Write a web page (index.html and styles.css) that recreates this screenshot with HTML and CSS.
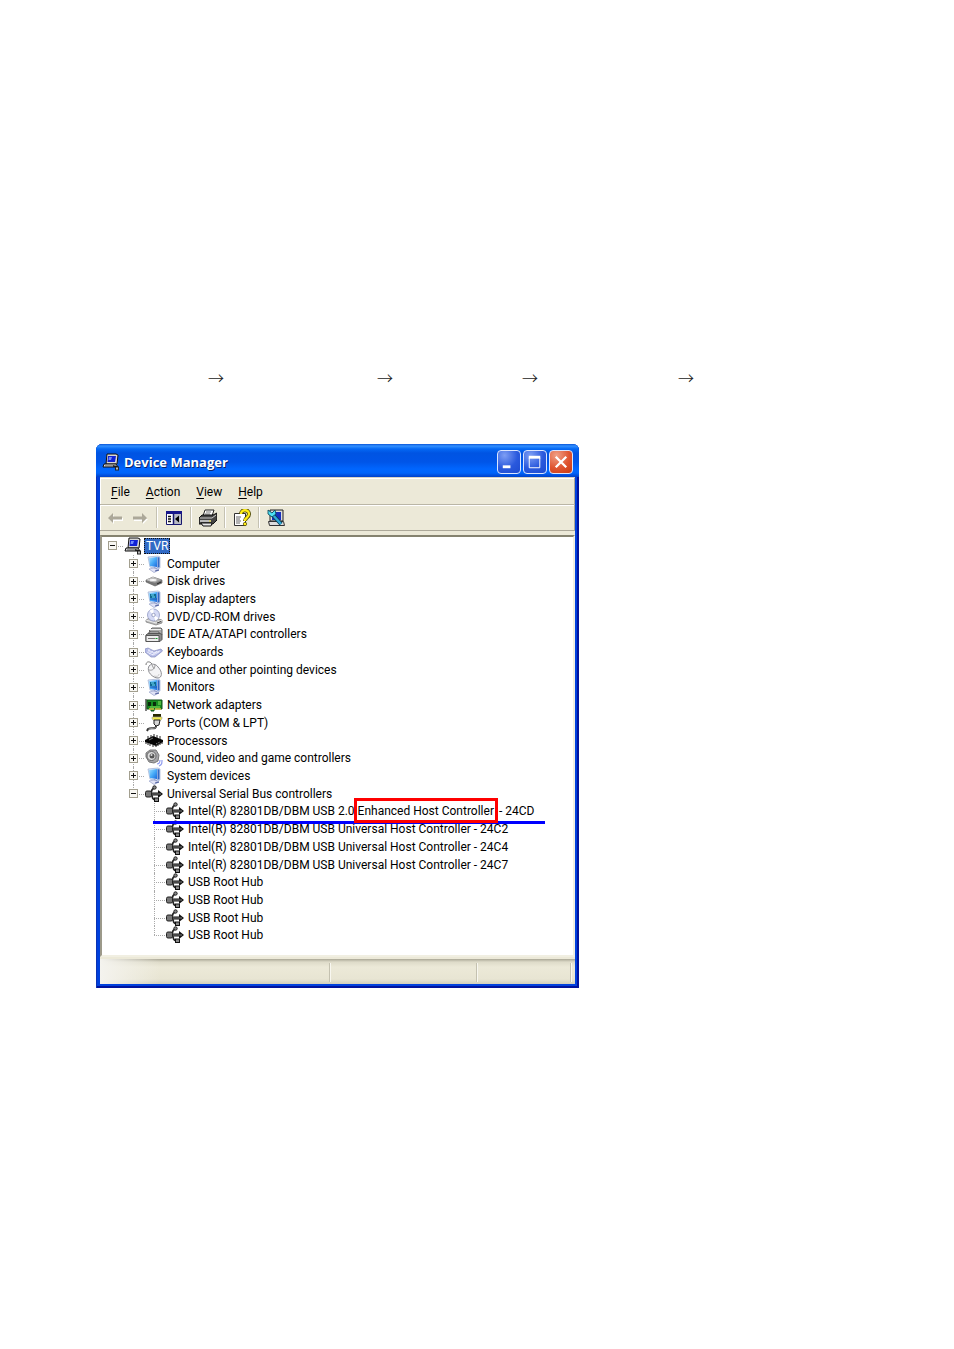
FILE: index.html
```html
<!DOCTYPE html>
<html lang="en">
<head>
<meta charset="utf-8">
<title>Device Manager</title>
<link rel="stylesheet" href="styles.css">
</head>
<body>
<svg class="defs" aria-hidden="true">
  <defs>
    <linearGradient id="screen" x1="0" y1="0" x2="1" y2="1"><stop offset="0" stop-color="#a4e0ff"/><stop offset=".5" stop-color="#48acf8"/><stop offset="1" stop-color="#1a68dc"/></linearGradient>
    <linearGradient id="metal" x1="0" y1="0" x2="1" y2="1"><stop offset="0" stop-color="#f4f4f4"/><stop offset="1" stop-color="#777"/></linearGradient>
  </defs>
  <symbol id="pc" viewBox="0 0 18 18">
    <path d="M5 1h9l2 1-1 9H4z" fill="#d8d8d8" stroke="#111"/><path d="M6 3h8l-1 6H5.500z" fill="#1022d8"/><path d="M7 4h3L9 7H6.500z" fill="#6f8cff"/>
    <path d="M2 11h12l2 3H1z" fill="#ddd" stroke="#111"/><path d="M3 13h9" stroke="#555"/><path d="M11 13c3 0 4 0 5 3" fill="none" stroke="#111" stroke-width="1.500"/><rect x="13.500" y="14" width="3" height="3" fill="#bbb" stroke="#222"/>
  </symbol>
  <symbol id="computer" viewBox="0 0 18 18">
    <path d="M3 2l10-1 2 1v11l-3 1-7-2z" fill="#dbe5f6" stroke="#9fb0d4" stroke-width=".7"/><path d="M4 3l8-1v10l-7-1z" fill="url(#screen)"/><path d="M12.500 2l2 .5V12l-2 1z" fill="#3568c4"/>
    <path d="M9 12l3 1v2H8z" fill="#8e9ac8"/><path d="M4 14l5-1 5 2-5 2.500z" fill="#e0e3f6" stroke="#9aa3cc" stroke-width=".7"/><path d="M10 16l4-1" stroke="#4f5f9f"/>
  </symbol>
  <symbol id="display" viewBox="0 0 18 18">
    <use href="#computer"/><path d="M5 4h6v4H5z" fill="#116a91"/><path d="M6 5h3M7 7h3" stroke="#73e1ff"/><path d="M5 9l7 0" stroke="#1754a5"/>
  </symbol>
  <symbol id="disk" viewBox="0 0 18 18">
    <path d="M1 8l7-3 9 3v3l-7 3-9-4z" fill="#777" stroke="#555" stroke-width=".6"/><path d="M1 8l7-3 9 3-7 3z" fill="url(#metal)"/><ellipse cx="8" cy="8" rx="4" ry="1.500" fill="#f8f8f8" stroke="#999" stroke-width=".5"/><path d="M12 12l4-2" stroke="#222"/>
  </symbol>
  <symbol id="dvd" viewBox="0 0 18 18">
    <path d="M1 12l5-3 11 3v3l-6 2-10-3z" fill="#bbb" stroke="#777" stroke-width=".7"/><path d="M1 12l10 3 6-3" fill="none" stroke="#eee"/><ellipse cx="8.500" cy="7" rx="6" ry="6" fill="#d5daf5" stroke="#8e97c0" stroke-width=".8"/><path d="M8.500 7l-4-4a6 6 0 0 1 4-2zM8.500 7l5 3-3 3z" fill="#fff"/><circle cx="8.500" cy="7" r="1.700" fill="#fff" stroke="#858eb8" stroke-width=".8"/><path d="M12 15l4-1.500" stroke="#444"/>
  </symbol>
  <symbol id="ide" viewBox="0 0 18 18">
    <path d="M4 6l3-3h9l1 1v6l-3 2z" fill="#aaa" stroke="#666"/><path d="M5 4.500h11" stroke="#eee"/><path d="M4 7h10v3H4z" fill="#eee" stroke="#555"/><path d="M1 10l2-1.500h12l2 1v5l-2 2H1z" fill="#8c8c8c" stroke="#555"/><path d="M1 10.500h13v6H1z" fill="#ededed" stroke="#555"/><path d="M3 13.500h7" stroke="#777"/><path d="M10.500 13.500h2" stroke="#12a22b"/>
  </symbol>
  <symbol id="keyboard" viewBox="0 0 18 18">
    <path d="M0 6l3-1 6 3 7-2 1.500 2-7.500 6H6L0 9z" fill="#b4bae6" stroke="#8289bc" stroke-width=".7"/><path d="M3 7l6 3 6-2M2 9l6 3 6-3M4 11l4-3M7 12l5-4M4 6v3" stroke="#f4f5ff" stroke-width=".8" fill="none"/>
  </symbol>
  <symbol id="mouse" viewBox="0 0 18 18">
    <path d="M1 4C1 0 5 0 7 3" fill="none" stroke="#777"/><path d="M4 5c3-3 7-2 9 1 5 5 4 11 0 11C8 17 1 11 4 5z" fill="#f4f4f6" stroke="#8d8d92"/><path d="M4 9c4 1 6-2 6-5M7 4l2 4" fill="none" stroke="#999"/><path d="M9 15c3 1 5 0 5-2" fill="none" stroke="#ccc"/>
  </symbol>
  <symbol id="network" viewBox="0 0 18 18">
    <path d="M1 3v12" stroke="#555" stroke-width="1.500"/><path d="M2 4h15v9H9v2H6v-2H2z" fill="#168c21" stroke="#114f16"/><path d="M3 6h3v4H3zM8 6h3v4H8z" fill="#092c0b"/><path d="M13 6h3M13 8h3M5 11h10" stroke="#87e15a"/><path d="M4 13h5M10 13h6" stroke="#d7c343" stroke-width="1.500"/>
  </symbol>
  <symbol id="port" viewBox="0 0 18 18">
    <path d="M8 0h8v3H8z" fill="#292900"/><path d="M7 3h10v2l-2 1.500H9L7 5z" fill="#f0e94a" stroke="#aaa" stroke-width=".6"/><path d="M9 6h6l-1 5-3 1-2-2z" fill="#d7d7d7" stroke="#222"/><path d="M11 12c0 4-5 1-8 3l-1 2" fill="none" stroke="#333" stroke-width="2"/><path d="M10.500 13c0 2-4 1-7 2" fill="none" stroke="#bbb" stroke-width=".7"/>
  </symbol>
  <symbol id="chip" viewBox="0 0 18 18">
    <path d="M0 8l8-4 10 4v2l-7 4-11-4z" fill="#050505"/><path d="M1 10v2M3 11v2M5 12v2M8 13v2M11 13v2M13 12v2M15 11v2M17 10v2M3 4v3M6 3v3M9 2v3M12 3v3M15 4v3" stroke="#222"/><path d="M4 8l4-2" stroke="#777"/><path d="M11 12l4-2" stroke="#999" stroke-dasharray="1 1"/>
  </symbol>
  <symbol id="sound" viewBox="0 0 18 18">
    <path d="M1 4l4-3 6 0 3 5-1 6-4 2-5-1-3-5z" fill="#a5a5a8" stroke="#777"/><circle cx="6.500" cy="7" r="4.500" fill="#ddd" stroke="#666"/><circle cx="7" cy="7" r="2.500" fill="#555"/><circle cx="6.500" cy="6" r="1" fill="#ddd"/><path d="M12 15c2 0 3-2 3-4M14 17c3-1 3-3 3-6" fill="none" stroke="#8e9aee" stroke-width="1.200"/>
  </symbol>
  <symbol id="usb" viewBox="0 0 18 18">
    <path d="M5 9h9" stroke="#111" stroke-width="3"/><path d="M5 8c3 0 0-4 4-4.500M6 9c2 1 0 6 5 6" fill="none" stroke="#222" stroke-width="1.700"/><path d="M13 5l5 4-5 4z" fill="#111"/><path d="M6 9h10" stroke="#999" stroke-width=".8"/><rect x=".5" y="6" width="6" height="6" rx="1.500" fill="#777" stroke="#222"/><circle cx="9.500" cy="2.500" r="1.700" fill="#888" stroke="#222"/><rect x="9.500" y="13" width="4" height="3.500" fill="#888" stroke="#111"/>
  </symbol>
</svg>

<main class="page">
  <p class="path"><span>→</span><span>→</span><span>→</span><span>→</span></p>

  <section class="window" aria-label="Device Manager">
    <header class="titlebar">
      <svg class="icon" aria-hidden="true"><use href="#pc"/></svg>
      <h1 class="title">Device Manager</h1>
      <div class="controls">
        <button class="control" aria-label="Minimize"><svg viewBox="0 0 23 23"><path d="M5 16.500h8" stroke="#fff" stroke-width="3"/></svg></button>
        <button class="control" aria-label="Maximize"><svg viewBox="0 0 23 23"><path d="M5.500 7v10.500h11V7" fill="none" stroke="#fff"/><path d="M5 6.500h12" stroke="#fff" stroke-width="3"/></svg></button>
        <button class="control close" aria-label="Close"><svg viewBox="0 0 23 23"><path d="M6 6l11 11M17 6L6 17" stroke="#fff" stroke-width="2.400"/></svg></button>
      </div>
    </header>

    <div class="client">
      <nav class="menubar">
        <button class="menu"><u>F</u>ile</button><button class="menu"><u>A</u>ction</button><button class="menu"><u>V</u>iew</button><button class="menu"><u>H</u>elp</button>
      </nav>
      <div class="toolbar">
        <button class="tool" aria-label="Back"><svg viewBox="0 0 18 18"><path d="M3 10l5-4v3h9v3H8v3" fill="#fff"/><path d="M2 9l5-5v3.500h9v3H7V14z" fill="#aca899"/></svg></button>
        <button class="tool" aria-label="Forward"><svg viewBox="0 0 18 18"><path d="M17 10l-5 5v-3H3v-2z" fill="#fff"/><path d="M16 9l-5-5v3.500H2v3h9V14z" fill="#aca899"/></svg></button>
        <span class="sep"></span>
        <button class="tool" aria-label="Show or hide console tree"><svg viewBox="0 0 18 18"><path d="M1.500 2.500h15v13h-15z" fill="#fff" stroke="#17176f"/><path d="M1 3.500h16" stroke="#17178b" stroke-width="3"/><path d="M9 5h7v10H9z" fill="#b9bbc4"/><path d="M8.500 5v10" stroke="#17176f" stroke-width="1.500"/><path d="M3 7.500h3M3 10h3M3 12.500h3" stroke="#111" stroke-width="1.300"/><path d="M14 6.500v7L10 10z" fill="#000"/></svg></button>
        <span class="sep"></span>
        <button class="tool" aria-label="Print"><svg viewBox="0 0 18 18"><path d="M6 1h9l-2 6H4z" fill="#fff" stroke="#222"/><path d="M7 3h5M6 5h5" stroke="#777"/><path d="M0 9l3-3h11l4-2v7l-4 4H0z" fill="#444" stroke="#111"/><path d="M1 9h12l4-3" fill="none" stroke="#ccc"/><path d="M1 11h11v2H1z" fill="#bbb"/><path d="M2 14h11l-1 3H4z" fill="#e8e8e8" stroke="#111"/><path d="M10 12h2" stroke="#e6d51c"/></svg></button>
        <span class="sep"></span>
        <button class="tool" aria-label="Help"><svg viewBox="0 0 18 18"><path d="M1.500 4.500h11v12h-11z" fill="#fff" stroke="#333"/><path d="M3 8h5M3 10h4M3 12h5M3 14h4" stroke="#666"/><path d="M8 5c0-5 8-5 8 0 0 4-4 3-4 7" fill="none" stroke="#4c4600" stroke-width="4"/><path d="M8 5c0-5 8-5 8 0 0 4-4 3-4 7" fill="none" stroke="#ffed18" stroke-width="2.300"/><circle cx="12" cy="15" r="1.700" fill="#ffed18" stroke="#4c4600" stroke-width=".7"/></svg></button>
        <span class="sep"></span>
        <button class="tool" aria-label="Scan for hardware changes"><svg viewBox="0 0 18 18"><path d="M3 1h13v11H3z" fill="#ddd" stroke="#222"/><path d="M5 3h9v8H5z" fill="#1830bd"/><path d="M1.500 12.500h15l1 4h-15z" fill="#ddd" stroke="#333"/><path d="M5 5l9 10" stroke="#063c50" stroke-width="4"/><path d="M5 5l9 10" stroke="#2fa8d8" stroke-width="2.500"/><path d="M1 1v4l4 3 4-3-1-4-3 3z" fill="#4de0f4" stroke="#063c50" stroke-width=".8"/></svg></button>
      </div>

      <div class="pane">
        <ul class="tree" role="tree">
          <li class="row" role="treeitem" aria-level="1"><span class="cell root"><button class="box" aria-label="Collapse"></button></span><svg class="icon" aria-hidden="true"><use href="#pc"/></svg><span class="label selected">TVR</span></li>
          <li class="row" role="treeitem" aria-level="2"><span class="cell"></span><span class="cell branch"><button class="box plus" aria-label="Expand"></button></span><svg class="icon" aria-hidden="true"><use href="#computer"/></svg><span class="label">Computer</span></li>
          <li class="row" role="treeitem" aria-level="2"><span class="cell"></span><span class="cell branch"><button class="box plus" aria-label="Expand"></button></span><svg class="icon" aria-hidden="true"><use href="#disk"/></svg><span class="label">Disk drives</span></li>
          <li class="row" role="treeitem" aria-level="2"><span class="cell"></span><span class="cell branch"><button class="box plus" aria-label="Expand"></button></span><svg class="icon" aria-hidden="true"><use href="#display"/></svg><span class="label">Display adapters</span></li>
          <li class="row" role="treeitem" aria-level="2"><span class="cell"></span><span class="cell branch"><button class="box plus" aria-label="Expand"></button></span><svg class="icon" aria-hidden="true"><use href="#dvd"/></svg><span class="label">DVD/CD-ROM drives</span></li>
          <li class="row" role="treeitem" aria-level="2"><span class="cell"></span><span class="cell branch"><button class="box plus" aria-label="Expand"></button></span><svg class="icon" aria-hidden="true"><use href="#ide"/></svg><span class="label">IDE ATA/ATAPI controllers</span></li>
          <li class="row" role="treeitem" aria-level="2"><span class="cell"></span><span class="cell branch"><button class="box plus" aria-label="Expand"></button></span><svg class="icon" aria-hidden="true"><use href="#keyboard"/></svg><span class="label">Keyboards</span></li>
          <li class="row" role="treeitem" aria-level="2"><span class="cell"></span><span class="cell branch"><button class="box plus" aria-label="Expand"></button></span><svg class="icon" aria-hidden="true"><use href="#mouse"/></svg><span class="label">Mice and other pointing devices</span></li>
          <li class="row" role="treeitem" aria-level="2"><span class="cell"></span><span class="cell branch"><button class="box plus" aria-label="Expand"></button></span><svg class="icon" aria-hidden="true"><use href="#display"/></svg><span class="label">Monitors</span></li>
          <li class="row" role="treeitem" aria-level="2"><span class="cell"></span><span class="cell branch"><button class="box plus" aria-label="Expand"></button></span><svg class="icon" aria-hidden="true"><use href="#network"/></svg><span class="label">Network adapters</span></li>
          <li class="row" role="treeitem" aria-level="2"><span class="cell"></span><span class="cell branch"><button class="box plus" aria-label="Expand"></button></span><svg class="icon" aria-hidden="true"><use href="#port"/></svg><span class="label">Ports (COM &amp; LPT)</span></li>
          <li class="row" role="treeitem" aria-level="2"><span class="cell"></span><span class="cell branch"><button class="box plus" aria-label="Expand"></button></span><svg class="icon" aria-hidden="true"><use href="#chip"/></svg><span class="label">Processors</span></li>
          <li class="row" role="treeitem" aria-level="2"><span class="cell"></span><span class="cell branch"><button class="box plus" aria-label="Expand"></button></span><svg class="icon" aria-hidden="true"><use href="#sound"/></svg><span class="label">Sound, video and game controllers</span></li>
          <li class="row" role="treeitem" aria-level="2"><span class="cell"></span><span class="cell branch"><button class="box plus" aria-label="Expand"></button></span><svg class="icon" aria-hidden="true"><use href="#computer"/></svg><span class="label">System devices</span></li>
          <li class="row" role="treeitem" aria-level="2"><span class="cell"></span><span class="cell branch last"><button class="box" aria-label="Collapse"></button></span><svg class="icon" aria-hidden="true"><use href="#usb"/></svg><span class="label">Universal Serial Bus controllers</span></li>
          <li class="row underlined" role="treeitem" aria-level="3"><span class="cell"></span><span class="cell"></span><span class="cell branch"></span><svg class="icon" aria-hidden="true"><use href="#usb"/></svg><span class="label">Intel(R) 82801DB/DBM USB 2.0 <span class="boxed">Enhanced Host Controller</span> - 24CD</span></li>
          <li class="row" role="treeitem" aria-level="3"><span class="cell"></span><span class="cell"></span><span class="cell branch"></span><svg class="icon" aria-hidden="true"><use href="#usb"/></svg><span class="label">Intel(R) 82801DB/DBM USB Universal Host Controller - 24C2</span></li>
          <li class="row" role="treeitem" aria-level="3"><span class="cell"></span><span class="cell"></span><span class="cell branch"></span><svg class="icon" aria-hidden="true"><use href="#usb"/></svg><span class="label">Intel(R) 82801DB/DBM USB Universal Host Controller - 24C4</span></li>
          <li class="row" role="treeitem" aria-level="3"><span class="cell"></span><span class="cell"></span><span class="cell branch"></span><svg class="icon" aria-hidden="true"><use href="#usb"/></svg><span class="label">Intel(R) 82801DB/DBM USB Universal Host Controller - 24C7</span></li>
          <li class="row" role="treeitem" aria-level="3"><span class="cell"></span><span class="cell"></span><span class="cell branch"></span><svg class="icon" aria-hidden="true"><use href="#usb"/></svg><span class="label">USB Root Hub</span></li>
          <li class="row" role="treeitem" aria-level="3"><span class="cell"></span><span class="cell"></span><span class="cell branch"></span><svg class="icon" aria-hidden="true"><use href="#usb"/></svg><span class="label">USB Root Hub</span></li>
          <li class="row" role="treeitem" aria-level="3"><span class="cell"></span><span class="cell"></span><span class="cell branch"></span><svg class="icon" aria-hidden="true"><use href="#usb"/></svg><span class="label">USB Root Hub</span></li>
          <li class="row" role="treeitem" aria-level="3"><span class="cell"></span><span class="cell"></span><span class="cell branch last"></span><svg class="icon" aria-hidden="true"><use href="#usb"/></svg><span class="label">USB Root Hub</span></li>
        </ul>
      </div>
      <footer class="status"><span class="part wide"></span><span class="part middle"></span><span class="part"></span></footer>
    </div>
  </section>
</main>
</body>
</html>
```
FILE: styles.css
```css
* { box-sizing: border-box; }
body { margin: 0; background: #fff; color: #000; font: 12px/16px Roboto, "Open Sans", sans-serif; }
button { padding: 0; border: 0; background: none; font: inherit; color: inherit; }
.defs { position: absolute; width: 0; height: 0; }

.page { padding: 367px 96px 0; }
.path { display: grid; grid-template-columns: 169px 145px 156px 16px; margin: 0 0 57px 112px; color: #222; font: 300 16px/20px "Noto Sans CJK JP", sans-serif; }

.window { max-width: 483px; padding: 0 4px 4px; border-radius: 6px 6px 0 0; background: #0040dd; box-shadow: inset 1px 0 #0a32b4, inset -2px -2px #00129c; }
.titlebar { display: flex; align-items: center; gap: 4px; height: 33px; margin: 0 -4px; padding: 3px 6px 0 6px; border-radius: 6px 6px 0 0;
  background: linear-gradient(#0a56d8 0, #3290ff 2px, #0468f4 5px, #0054e3 9px, #0055e8 18px, #0066ff 25px, #0064fa 29px, #0040c8 33px); }
.title { flex: 1; margin: 0; color: #fff; font: 700 13px/18px "Open Sans", sans-serif; text-shadow: 1px 1px #0a246a; }
.controls { display: flex; gap: 2px; }
.control { width: 24px; height: 24px; border: 1px solid #dbe6ff; border-radius: 4px; background: radial-gradient(circle at 30% 20%, #7e9ef4, #2a59dd 55%, #1e4bd0); }
.control.close { background: radial-gradient(circle at 30% 20%, #f0a086, #df5430 55%, #c93a12); }
.control svg { display: block; width: 22px; height: 22px; }

.client { background: #ece9d8; border-top: 1px solid #d8d4c4; }
.menubar { display: flex; gap: 16px; height: 27px; padding: 1px 11px 0; border-right: 1px solid #aca899; border-bottom: 1px solid #bab6a6; box-shadow: inset 1px 1px #fff; }
.menubar u { text-underline-offset: 2px; }
.toolbar { display: flex; align-items: center; height: 26px; padding: 0 2px; border-right: 1px solid #aca899; border-bottom: 1px solid #aca899; box-shadow: inset 1px 1px #fff; }
.tool { width: 25px; height: 22px; display: grid; place-items: center; }
.tool svg { width: 18px; height: 18px; }
.sep { width: 2px; height: 21px; margin: 0 3px 0 4px; border-left: 1px solid #c5c2b2; border-right: 1px solid #fff; }

.pane { margin-top: 4px; padding: 0 0 11px; background: #fff; border: 2px solid; border-color: #85826f #f1efe2 #f1efe2 #9c998a; }
.tree { display: flex; flex-direction: column; min-height: 407px; margin: 0; padding: 0; list-style: none; }
.row { position: relative; display: flex; flex: 1 0 17px; align-items: center; height: 0; }
.icon { flex: none; width: 18px; height: 18px; }
.row .icon { margin: 0 2px 0 1px; }
.label { padding: 0 2px; white-space: nowrap; }
.selected { background: #316ac5; color: #fff; outline: 1px dotted #111; outline-offset: -1px; }
.cell { position: relative; display: grid; place-items: center; flex: none; align-self: stretch; width: 21px; }
.branch::before { content: ""; position: absolute; left: 10px; top: 0; bottom: 0; border-left: 1px dotted #aaa; }
.branch.last::before { bottom: 50%; }
.branch::after, .root::after { content: ""; position: absolute; left: 10px; right: 0; top: 50%; border-top: 1px dotted #aaa; }
.box { position: relative; z-index: 1; width: 9px; height: 9px; border: 1px solid #a39f8f;
  background: linear-gradient(#111, #111) center / 5px 1px no-repeat, #f8f7f3; }
.box.plus { background: linear-gradient(#111, #111) center / 5px 1px no-repeat, linear-gradient(#111, #111) center / 1px 5px no-repeat, #f8f7f3; }

.boxed { position: relative; margin-right: 2px; }
.boxed::after { content: ""; position: absolute; z-index: 2; inset: -6px -4px -5px -4px; border: 3px solid #f00; }
.underlined::after { content: ""; position: absolute; z-index: 1; left: 51px; bottom: -4px; width: 392px; height: 3px; background: #00f; }

.status { display: flex; height: 25px; margin-top: 2px; padding: 4px 3px 2px 0;
  background: linear-gradient(90deg, #f4f3ee, #f4f3ee00 60px), linear-gradient(#aaa796, #dedbc9 3px, #ece9d8 8px, #e8e5d3 20px, #d2cfbd); }
.part { flex: 1; border-right: 1px solid #f8f7f0; box-shadow: inset -1px 0 #c4c1b0; }
.wide { flex: 0 1 231px; }
.middle { flex: 0 1 147px; }
```
